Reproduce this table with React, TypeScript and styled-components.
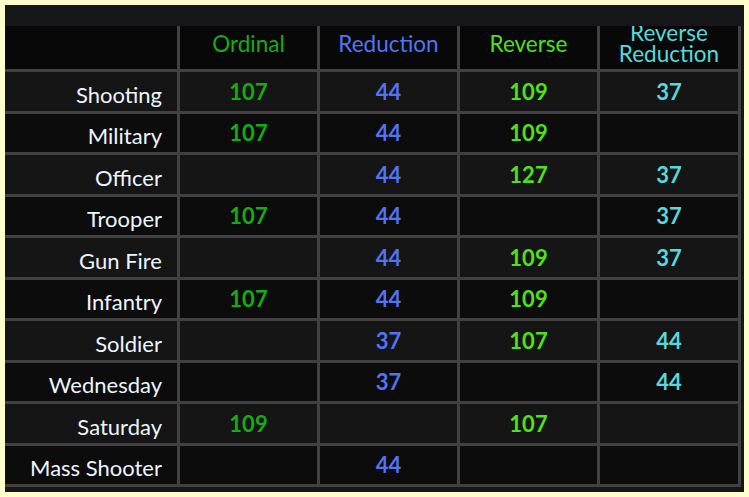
import React from 'react';
import styled, { createGlobalStyle } from 'styled-components';

const GlobalStyle = createGlobalStyle`
  html, body {
    margin: 0;
    padding: 0;
    background: #ffffcc;
  }
  body {
    font-family: Lato, "Open Sans", sans-serif;
  }
`;

const COLORS = {
  ordinal: '#13ad13',
  reduction: '#5274f4',
  reverse: '#4fe019',
  reverseReduction: '#55d9de',
  label: '#eef6ff',
  line: '#414141',
  header: '#080808',
  rowLight: '#151515',
  rowDark: '#0c0c0c',
  band: '#17171a',
};

const Page = styled.div`
  padding: 5px;
  width: 749px;
  height: 497px;
  box-sizing: border-box;
`;

const Frame = styled.div`
  background: ${COLORS.band};
  height: 487px;
  display: flex;
  flex-direction: column;
  overflow: hidden;
`;

const TopBand = styled.div`
  height: 21px;
  flex: none;
`;

const Table = styled.div`
  display: flex;
  flex-direction: column;
  gap: 3px;
  background: ${COLORS.line};
  padding: 0 3px 3px 0;
  margin-right: 3px;
`;

const Row = styled.div<{ $height: number }>`
  display: grid;
  grid-template-columns: 172px 137px 137px 137px 138px;
  column-gap: 3px;
  height: ${(p) => p.$height}px;
`;

const Cell = styled.div<{ $bg: string }>`
  background: ${(p) => p.$bg};
  display: flex;
  align-items: center;
  justify-content: center;
  overflow: hidden;
`;

const HeadCell = styled(Cell)<{ $color: string }>`
  color: ${(p) => p.$color};
  font-size: 22.5px;
  line-height: 21px;
  text-align: center;
  padding-bottom: 9px;
`;

const LabelCell = styled(Cell)`
  justify-content: flex-end;
  padding: 6px 15px 0 0;
  color: ${COLORS.label};
  font-size: 22px;
`;

const Value = styled(Cell)<{ $color: string }>`
  color: ${(p) => p.$color};
  font-size: 22px;
  font-weight: 700;
`;

const columns = [
  { title: 'Ordinal', color: COLORS.ordinal },
  { title: 'Reduction', color: COLORS.reduction },
  { title: 'Reverse', color: COLORS.reverse },
  { title: 'Reverse\nReduction', color: COLORS.reverseReduction },
];

const rows: [string, (number | null)[]][] = [
  ['Shooting', [107, 44, 109, 37]],
  ['Military', [107, 44, 109, null]],
  ['Officer', [null, 44, 127, 37]],
  ['Trooper', [107, 44, null, 37]],
  ['Gun Fire', [null, 44, 109, 37]],
  ['Infantry', [107, 44, 109, null]],
  ['Soldier', [null, 37, 107, 44]],
  ['Wednesday', [null, 37, null, 44]],
  ['Saturday', [109, null, 107, null]],
  ['Mass Shooter', [null, 44, null, null]],
];

const App = () => {
  return (
    <Page>
      <GlobalStyle />
      <Frame>
        <TopBand />
        <Table>
          <Row $height={43}>
            <Cell $bg={COLORS.header} />
            {columns.map((c) => (
              <HeadCell key={c.title} $bg={COLORS.header} $color={c.color}>
                {c.title.split('\n').map((line, i) => (
                  <React.Fragment key={line}>
                    {i > 0 && <br />}
                    {line}
                  </React.Fragment>
                ))}
              </HeadCell>
            ))}
          </Row>
          {rows.map(([label, values], i) => {
            const bg = i % 2 === 0 ? COLORS.rowLight : COLORS.rowDark;
            return (
              <Row key={label} $height={38.5}>
                <LabelCell $bg={bg}>{label}</LabelCell>
                {values.map((v, j) => (
                  <Value key={j} $bg={bg} $color={columns[j].color}>
                    {v ?? ''}
                  </Value>
                ))}
              </Row>
            );
          })}
        </Table>
      </Frame>
    </Page>
  );
};

export default App;
